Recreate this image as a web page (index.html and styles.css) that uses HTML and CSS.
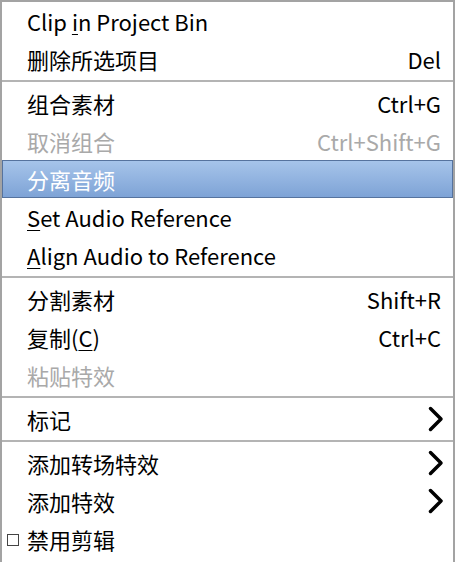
FILE: index.html
```html
<!DOCTYPE html>
<html lang="zh">
<head>
    <meta charset="UTF-8"/>
    <title>Context Menu</title>
    <link rel="stylesheet" href="styles.css">
</head>
<body>

<div class="menu">
    <div class="item"><span class="label">Clip <u>i</u>n Project Bin</span></div>
    <div class="item"><span class="label">删除所选项目</span><span class="shortcut">Del</span></div>
    <div class="sep"></div>

    <div class="item"><span class="label">组合素材</span><span class="shortcut">Ctrl+G</span></div>
    <div class="item disabled"><span class="label">取消组合</span><span class="shortcut">Ctrl+Shift+G</span></div>
    <div class="item active"><span class="label">分离音频</span></div>
    <div class="item"><span class="label"><u>S</u>et Audio Reference</span></div>
    <div class="item"><span class="label"><u>A</u>lign Audio to Reference</span></div>
    <div class="sep"></div>

    <div class="item"><span class="label">分割素材</span><span class="shortcut">Shift+R</span></div>
    <div class="item"><span class="label">复制(<u>C</u>)</span><span class="shortcut">Ctrl+C</span></div>
    <div class="item disabled"><span class="label">粘贴特效</span></div>
    <div class="sep"></div>

    <div class="item"><span class="label">标记</span>
        <svg class="arrow" width="16" height="26" viewBox="0 0 16 26"><polyline points="2.5,2.5 13,13 2.5,23.5"/></svg>
    </div>
    <div class="sep"></div>

    <div class="item"><span class="label">添加转场特效</span>
        <svg class="arrow" width="16" height="26" viewBox="0 0 16 26"><polyline points="2.5,2.5 13,13 2.5,23.5"/></svg>
    </div>
    <div class="item"><span class="label">添加特效</span>
        <svg class="arrow" width="16" height="26" viewBox="0 0 16 26"><polyline points="2.5,2.5 13,13 2.5,23.5"/></svg>
    </div>
    <div class="item"><span class="check"></span><span class="label">禁用剪辑</span></div>
</div>

</body>
</html>
```

FILE: styles.css
```css
* {
    box-sizing: border-box;
}

body {
    margin: 0;
    font-family: "Noto Sans CJK SC", "Noto Sans", sans-serif;
    background: #fff;
}

.menu {
    height: 100vh;
    border: 2px solid #a3a3a3;
    border-bottom: none;
    overflow: hidden;
    background: #fff;
}

.item {
    position: relative;
    display: flex;
    align-items: center;
    height: 38px;
    padding: 0 12px 0 25px;
    font-size: 22px;
    color: #000;
}

.item .label {
    flex: 1;
    white-space: nowrap;
}

.item u {
    text-decoration-thickness: 1px;
    text-underline-offset: 3px;
}

.item .shortcut {
    white-space: nowrap;
}

.item.disabled {
    color: #a9a9a9;
}

.item.active {
    color: #fff;
    background: linear-gradient(to bottom, #a6c4ea, #7ea3d6);
    border: 1px solid #56739e;
    padding-left: 24px;
}

.sep {
    height: 6px;
    display: flex;
    align-items: center;
}

.sep::after {
    content: "";
    flex: 1;
    height: 2px;
    background: #b4b4b4;
}

.arrow {
    margin-right: -3px;
}

.arrow polyline {
    fill: none;
    stroke: #000;
    stroke-width: 3.5;
    stroke-linecap: round;
    stroke-linejoin: round;
}

.check {
    position: absolute;
    left: 5px;
    top: 14px;
    width: 12px;
    height: 12px;
    border: 1px solid #444;
}
```
